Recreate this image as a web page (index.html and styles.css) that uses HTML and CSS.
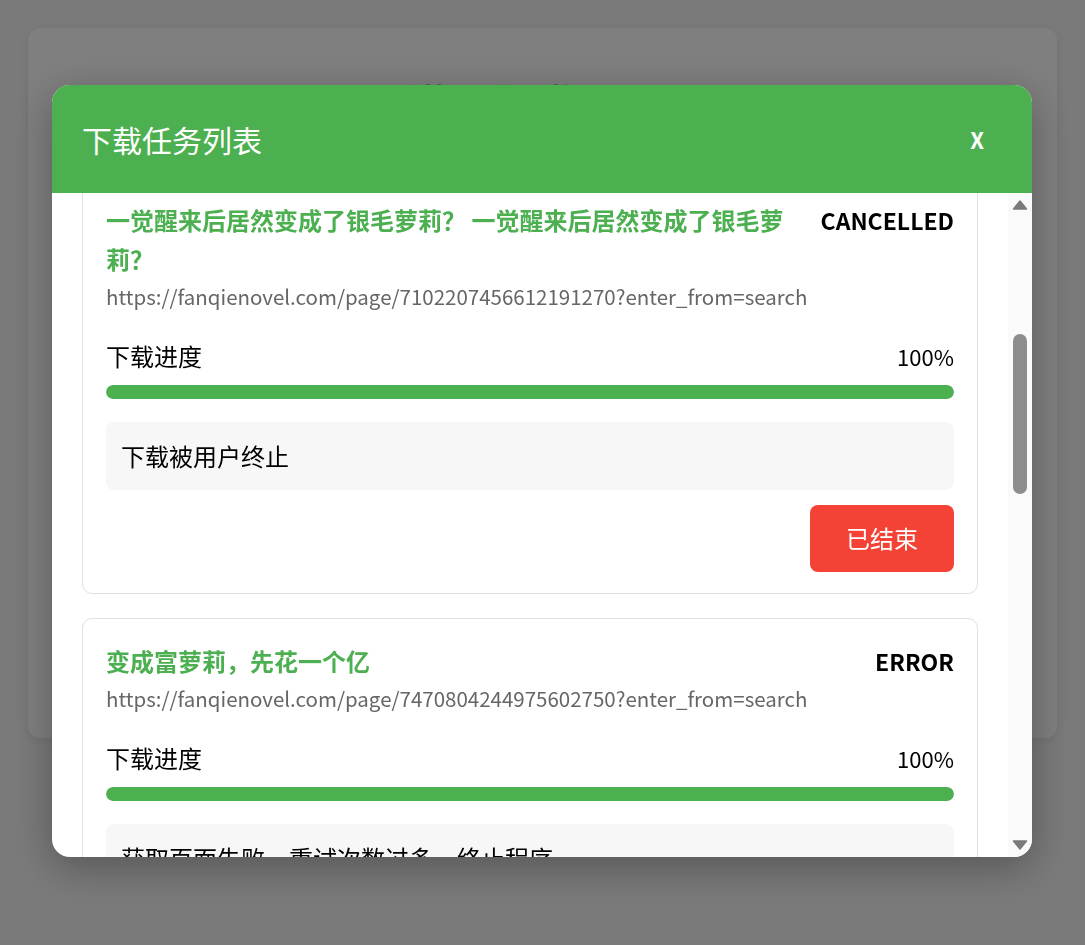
FILE: index.html
```html
<!DOCTYPE html>
<html lang="zh-CN">
<head>
<meta charset="utf-8">
<title>番茄小说下载器</title>
<link rel="stylesheet" href="styles.css">
</head>
<body>
<div class="page">
  <h1 class="page-title">番茄小说下载器</h1>
</div>

<div class="overlay">
  <div class="modal">
    <div class="modal-header">
      <h2 class="modal-title">下载任务列表</h2>
      <span class="modal-close">X</span>
    </div>
    <div class="modal-main">
      <div class="modal-body" id="taskList">
        <div class="task">
          <div class="task-head">
            <div class="task-title">一觉醒来后居然变成了银毛萝莉？ 一觉醒来后居然变成了银毛萝莉？</div>
            <div class="task-status">COMPLETED</div>
          </div>
          <div class="task-url">https://fanqienovel.com/page/7102207456612191270?enter_from=search</div>
          <div class="progress-row"><span>下载进度</span><span class="pct">100%</span></div>
          <div class="bar"><div class="bar-fill" style="width:100%"></div></div>
          <div class="task-msg">下载完成</div>
          <div class="task-actions"><button class="btn-end">已结束</button></div>
        </div>

        <div class="task">
          <div class="task-head">
            <div class="task-title">一觉醒来后居然变成了银毛萝莉？ 一觉醒来后居然变成了银毛萝莉？</div>
            <div class="task-status">CANCELLED</div>
          </div>
          <div class="task-url">https://fanqienovel.com/page/7102207456612191270?enter_from=search</div>
          <div class="progress-row"><span>下载进度</span><span class="pct">100%</span></div>
          <div class="bar"><div class="bar-fill" style="width:100%"></div></div>
          <div class="task-msg">下载被用户终止</div>
          <div class="task-actions"><button class="btn-end">已结束</button></div>
        </div>

        <div class="task">
          <div class="task-head">
            <div class="task-title">变成富萝莉，先花一个亿</div>
            <div class="task-status">ERROR</div>
          </div>
          <div class="task-url">https://fanqienovel.com/page/7470804244975602750?enter_from=search</div>
          <div class="progress-row"><span>下载进度</span><span class="pct">100%</span></div>
          <div class="bar"><div class="bar-fill" style="width:100%"></div></div>
          <div class="task-msg">获取页面失败，重试次数过多，终止程序</div>
          <div class="task-actions"><button class="btn-end">已结束</button></div>
        </div>

        <div class="task">
          <div class="task-head">
            <div class="task-title">变成富萝莉，先花一个亿</div>
            <div class="task-status">ERROR</div>
          </div>
          <div class="task-url">https://fanqienovel.com/page/7470804244975602750?enter_from=search</div>
          <div class="progress-row"><span>下载进度</span><span class="pct">100%</span></div>
          <div class="bar"><div class="bar-fill" style="width:100%"></div></div>
          <div class="task-msg">获取页面失败，重试次数过多，终止程序</div>
          <div class="task-actions"><button class="btn-end">已结束</button></div>
        </div>

        <div class="task">
          <div class="task-head">
            <div class="task-title">变成富萝莉，先花一个亿</div>
            <div class="task-status">COMPLETED</div>
          </div>
          <div class="task-url">https://fanqienovel.com/page/7470804244975602750?enter_from=search</div>
          <div class="progress-row"><span>下载进度</span><span class="pct">100%</span></div>
          <div class="bar"><div class="bar-fill" style="width:100%"></div></div>
          <div class="task-msg">下载完成</div>
          <div class="task-actions"><button class="btn-end">已结束</button></div>
        </div>

        <div class="task">
          <div class="task-head">
            <div class="task-title">变成富萝莉，先花一个亿</div>
            <div class="task-status">COMPLETED</div>
          </div>
          <div class="task-url">https://fanqienovel.com/page/7470804244975602750?enter_from=search</div>
          <div class="progress-row"><span>下载进度</span><span class="pct">100%</span></div>
          <div class="bar"><div class="bar-fill" style="width:100%"></div></div>
          <div class="task-msg">下载完成</div>
          <div class="task-actions"><button class="btn-end">已结束</button></div>
        </div>
      </div>

      <div class="scrollbar" aria-hidden="true">
        <div class="sb-btn">
          <svg width="16" height="12" viewBox="0 0 16 12"><path d="M8 2 L14.5 10 H1.5 Z" fill="#7a7a7a" stroke="#7a7a7a" stroke-width="1.5" stroke-linejoin="round"/></svg>
        </div>
        <div class="sb-track" id="sbTrack">
          <div class="sb-thumb" id="sbThumb"></div>
        </div>
        <div class="sb-btn">
          <svg width="16" height="12" viewBox="0 0 16 12"><path d="M8 10 L14.5 2 H1.5 Z" fill="#7a7a7a" stroke="#7a7a7a" stroke-width="1.5" stroke-linejoin="round"/></svg>
        </div>
      </div>
    </div>
  </div>
</div>
<script src="script.js"></script>
</body>
</html>
```

FILE: styles.css
```css
html, body {
  margin: 0;
  padding: 0;
}
body {
  background: #f4f4f4;
  font-family: "Noto Sans CJK SC", sans-serif;
  font-size: 24px;
  line-height: 1.6;
  color: #000;
  padding: 8px;
}
.page {
  margin: 20px;
  height: 710px;
  background: #fff;
  border-radius: 12px;
  box-shadow: 0 2px 10px rgba(0,0,0,0.08);
  padding: 51px 90px 0 0;
  box-sizing: border-box;
}
.page-title {
  margin: 0;
  text-align: center;
  color: #4caf50;
  font-size: 32px;
  line-height: 1.2;
}
.overlay {
  position: fixed;
  inset: 0;
  background: rgba(0,0,0,0.5);
  display: flex;
  justify-content: center;
  align-items: flex-start;
  padding: 85px 1px 0 0;
}
.modal {
  width: 980px;
  height: 772px;
  background: #fff;
  border-radius: 18px;
  overflow: hidden;
  display: flex;
  flex-direction: column;
  box-shadow: 0 10px 40px rgba(0,0,0,0.3);
}
.modal-header {
  background: #4caf50;
  color: #fff;
  height: 108px;
  flex: 0 0 108px;
  display: flex;
  align-items: center;
  justify-content: space-between;
  padding: 0 48px 0 30px;
}
.modal-title {
  margin: 0;
  font-size: 30px;
  font-weight: 400;
}
.modal-close {
  font-size: 22px;
  font-weight: 700;
  line-height: 1;
}
.modal-main {
  flex: 1;
  min-height: 0;
  display: flex;
}
.modal-body {
  position: relative;
  flex: 1;
  overflow-y: auto;
  scrollbar-width: none;
  padding: 30px;
}
.modal-body::-webkit-scrollbar {
  display: none;
}
.scrollbar {
  width: 24px;
  flex: 0 0 24px;
  background: #fafafa;
  display: flex;
  flex-direction: column;
}
.sb-btn {
  height: 24px;
  flex: 0 0 24px;
  display: flex;
  align-items: center;
  justify-content: center;
}
.sb-btn svg {
  display: block;
}
.sb-track {
  flex: 1;
  position: relative;
}
.sb-thumb {
  position: absolute;
  left: 5px;
  right: 5px;
  top: 113px;
  height: 162px;
  background: #8c8c8c;
  border-radius: 7px;
}
.task {
  border: 1px solid #e0e0e0;
  border-radius: 10px;
  padding: 23px 23px 21px;
  margin-bottom: 24px;
  background: #fff;
}
.task-head {
  display: flex;
  align-items: flex-start;
  justify-content: space-between;
  gap: 20px;
}
.task-title {
  flex: 1;
  color: #4caf50;
  font-weight: 700;
}
.task-status {
  flex-shrink: 0;
  font-weight: 700;
  font-size: 23px;
  line-height: 38.4px;
  white-space: nowrap;
}
.task-url {
  color: #666;
  font-size: 20.5px;
  line-height: 36px;
  padding-bottom: 2.4px;
}
.progress-row {
  display: flex;
  justify-content: space-between;
  align-items: center;
  margin-top: 20px;
}
.pct {
  font-size: 22px;
  line-height: 38.4px;
}
.bar {
  margin-top: 10px;
  height: 14px;
  border-radius: 7px;
  background: #e0e0e0;
  overflow: hidden;
}
.bar-fill {
  height: 100%;
  background: #4caf50;
  border-radius: 7px;
}
.task-msg {
  margin-top: 23px;
  background: #f7f7f7;
  border-radius: 8px;
  padding: 15px;
}
.task-actions {
  display: flex;
  justify-content: flex-end;
  margin-top: 15px;
}
.btn-end {
  font-family: inherit;
  font-size: 24px;
  line-height: 1.6;
  color: #fff;
  background: #f44336;
  border: none;
  border-radius: 8px;
  padding: 14px 36px;
}
```

FILE: script.js
```js
(function () {
  var body = document.getElementById('taskList');
  var cards = body.querySelectorAll('.task');
  body.scrollTop = cards[1].offsetTop + 16;

  var track = document.getElementById('sbTrack');
  var thumb = document.getElementById('sbThumb');
  var trackH = track.clientHeight;
  var total = body.scrollHeight;
  thumb.style.height = Math.round(trackH * body.clientHeight / total) + 'px';
  thumb.style.top = Math.round(trackH * body.scrollTop / total) + 'px';
})();
```
